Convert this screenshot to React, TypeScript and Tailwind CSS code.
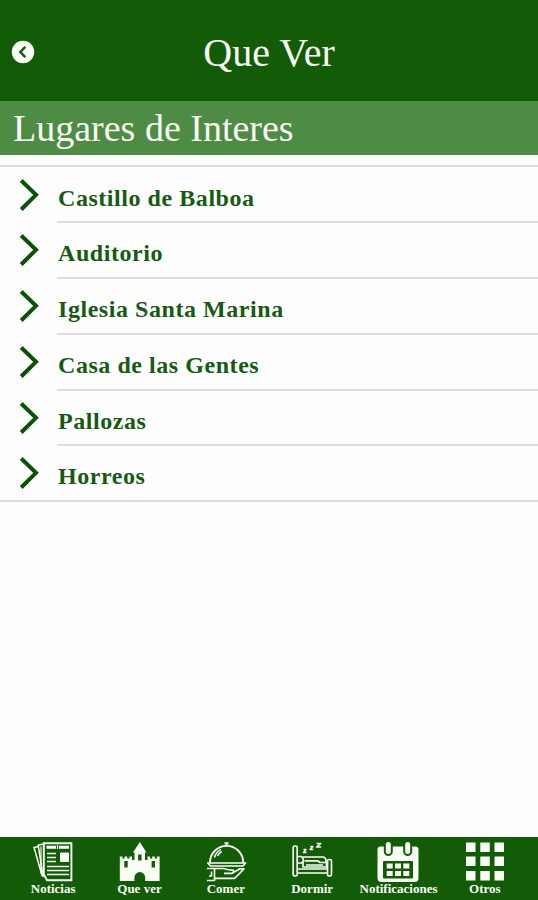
import React, { useState } from 'react';

interface IconProps {
  className?: string;
}

interface Tab {
  id: string;
  label: string;
  Icon: (props: IconProps) => React.JSX.Element;
}

const places = [
  'Castillo de Balboa',
  'Auditorio',
  'Iglesia Santa Marina',
  'Casa de las Gentes',
  'Pallozas',
  'Horreos',
];

const NewsIcon = ({ className }: IconProps) => (
  <svg viewBox="0 0 48 44" fill="none" stroke="currentColor" className={className}>
    <path d="M10 8.2 5 9.500l8.200 28.500M14.500 6l-5.300 1.200 5 32" strokeWidth="1.500" />
    <path d="M12 8.500v27" strokeWidth="1.200" />
    <path d="M14.800 5.200h27.600v37H18l-3.200-6z" strokeWidth="1.900" />
    <path d="M17.500 9.200h9.500M30 9.200h10" strokeWidth="3" />
    <path d="M28.500 7v4" strokeWidth="1.200" />
    <path d="M18 15.500h9M18 19.500h9M18 23.500h9M18 28.500h22M18 32.500h22M18 36.500h22" strokeWidth="1.600" />
    <path d="M31.500 15h8v8.500h-8z" fill="currentColor" strokeWidth="1" />
  </svg>
);

const CastleIcon = ({ className }: IconProps) => (
  <svg viewBox="0 0 48 44" fill="currentColor" className={className}>
    <path
      fillRule="evenodd"
      d="M24.800 4 31.500 14.500h-1.500V22h2.500v-3.500h2.500v2h2.200v-2h2.600v2H42v-2h2.600v24.500H30.200V39.500a5.400 5.400 0 0 0-10.800 0V43H4.800V18.500h2.600v2h2.200v-2h2.600v2h2.300v-2H17V22h2.500v-7.500H18zM23.100 16.500v6h3.400v-6zM9.300 23v6.500h3.400V23zM36.600 23v6.500h3.400V23z"
    />
  </svg>
);

const DishIcon = ({ className }: IconProps) => (
  <svg viewBox="0 0 48 44" fill="none" stroke="currentColor" strokeLinejoin="round" className={className}>
    <path d="M22.500 5.200h4M24.500 5v3" strokeWidth="2" />
    <path d="M8 24.500a16.600 16.600 0 0 1 33.200 0" strokeWidth="1.900" />
    <path d="M12.500 19.500c1-3.800 3-6.500 6.500-8.200M15.500 18c1-2.300 2.200-3.500 4.200-4.500" strokeWidth="1.500" />
    <path d="M5.800 25h37.800L41 28H8.500z" strokeWidth="1.700" />
    <path d="M13 30.500h8c3 0 4 1.500 7 1.500h2.500c1.500 0 1.500 3-.5 3.300H22M30 35.300l8-4.500h4c-3 3.500-6 6.500-9.500 9.500H13" strokeWidth="1.700" />
    <path d="M5 30.500h7.500v12H5M9.500 33.500v5M7 38h2.500" strokeWidth="1.600" />
  </svg>
);

const BedIcon = ({ className }: IconProps) => (
  <svg viewBox="0 0 48 44" fill="none" stroke="currentColor" strokeWidth="1.700" strokeLinejoin="round" className={className}>
    <path d="M15.500 11.500h2.500l-2.500 3h3M22 8.500h3L22 11.500h3.200M28.500 5.500h4.300l-4.300 3.600h4.600" strokeWidth="1.500" />
    <rect x="5.200" y="8" width="4" height="30" rx="1.500" />
    <rect x="39.500" y="21.500" width="4" height="16.500" rx="1.500" />
    <path d="M9.500 31h30M9.500 35h30M9.500 18.500h3.500c2.500 1 3.200 4.500 1 6.500H9.500" />
    <path d="M14.500 19h21c2 .8 2.800 3 2.500 5.500h-6l-2.500-1.700H16.500M15 24v5h23.500v-4.500M18 27h17" />
  </svg>
);

const CalendarIcon = ({ className }: IconProps) => (
  <svg viewBox="0 0 48 44" fill="currentColor" className={className}>
    <path
      fillRule="evenodd"
      d="M6.500 8.500h3.300v5a4.500 4.500 0 0 0 9 0v-5h10.400v5a4.500 4.500 0 0 0 9 0v-5h3.300a3 3 0 0 1 3 3V40a4 4 0 0 1-4 4h-33a4 4 0 0 1-4-4V11.500a3 3 0 0 1 3-3zM9 24v15.500a1 1 0 0 0 1 1h28a1 1 0 0 0 1-1V24a1 1 0 0 0-1-1H10a1 1 0 0 0-1 1z"
    />
    <rect x="11.800" y="4" width="5" height="12" rx="2.500" />
    <rect x="31.200" y="4" width="5" height="12" rx="2.500" />
    <path d="M12.700 25.500h6v5h-6zM21 25.500h6v5h-6zM29.300 25.500h6v5h-6zM12.700 33h6v5h-6zM21 33h6v5h-6zM29.300 33h6v5h-6z" />
  </svg>
);

const GridIcon = ({ className }: IconProps) => (
  <svg viewBox="0 0 48 44" fill="currentColor" className={className}>
    <path d="M5 4.500h9.500v9.500H5zM19.300 4.500h9.500v9.500h-9.500zM33.500 4.500H43v9.500h-9.500zM5 18.500h9.500V28H5zM19.300 18.500h9.500V28h-9.500zM33.500 18.500H43V28h-9.500zM5 33h9.500v9.500H5zM19.300 33h9.500v9.500h-9.500zM33.500 33H43v9.500h-9.500z" />
  </svg>
);

const tabs: Tab[] = [
  { id: 'noticias', label: 'Noticias', Icon: NewsIcon },
  { id: 'quever', label: 'Que ver', Icon: CastleIcon },
  { id: 'comer', label: 'Comer', Icon: DishIcon },
  { id: 'dormir', label: 'Dormir', Icon: BedIcon },
  { id: 'notificaciones', label: 'Notificaciones', Icon: CalendarIcon },
  { id: 'otros', label: 'Otros', Icon: GridIcon },
];

const Header = ({ title }: { title: string }) => (
  <header className="h-[101px] shrink-0 bg-[#125b07] text-[#fafff5] grid grid-cols-[46px_1fr_46px] items-center">
    <button aria-label="Volver" className="pl-[10.500px] pt-[3px]">
      <svg viewBox="0 0 24 24" className="w-6 h-6">
        <circle cx="12" cy="12" r="11.200" fill="#fcfff8" />
        <path d="m14.300 6.800-5 5.200 5 5.200" fill="none" stroke="#125b07" strokeWidth="2.400" />
      </svg>
    </button>
    <h1 className="text-center text-[40px] leading-[48px] pt-[5px]">{title}</h1>
  </header>
);

const PlaceRow = ({ name, last }: { name: string; last: boolean }) => (
  <li className={`flex ${last ? 'h-[54px]' : 'h-[55.700px]'}`}>
    <div className="w-[57px] shrink-0 pl-[19px] pt-[11px]">
      <svg viewBox="0 0 20 32" fill="none" stroke="#0c5206" strokeWidth="4" className="w-5 h-8">
        <path d="M2.200 1.500 17 15.800 2.200 30.500" />
      </svg>
    </div>
    <div className={`flex-1 pl-px pt-[14px] ${last ? '' : 'border-b-2 border-[#dedede]'}`}>
      <span className="block text-2xl leading-8 font-bold tracking-[0.550px] text-[#155b12]">{name}</span>
    </div>
  </li>
);

export default function App() {
  const [activeTab, setActiveTab] = useState('quever');

  return (
    <div className="flex flex-col w-full h-screen overflow-hidden bg-[#fefefe] font-['Liberation_Serif',serif]">
      <Header title="Que Ver" />
      <h2 className="h-[54px] shrink-0 bg-[#4e8b45] pl-[13px] text-[38px] leading-[55px] text-[#fafff5]">
        Lugares de Interes
      </h2>

      <main className="flex-1 pt-[10px]">
        <ul className="border-y-2 border-[#dedede] pt-[0.800px]">
          {places.map((place, i) => (
            <PlaceRow key={place} name={place} last={i === places.length - 1} />
          ))}
        </ul>
      </main>

      <nav className="h-[63px] shrink-0 bg-[#125b07] text-[#fafff5] px-[10px] grid grid-cols-6">
        {tabs.map(({ id, label, Icon }) => (
          <button
            key={id}
            onClick={() => setActiveTab(id)}
            aria-current={activeTab === id ? 'page' : undefined}
            className="flex flex-col items-center pt-px"
          >
            <Icon className="w-12 h-11" />
            <span className="-mt-px text-[13px] leading-4 font-bold">{label}</span>
          </button>
        ))}
      </nav>
    </div>
  );
}
